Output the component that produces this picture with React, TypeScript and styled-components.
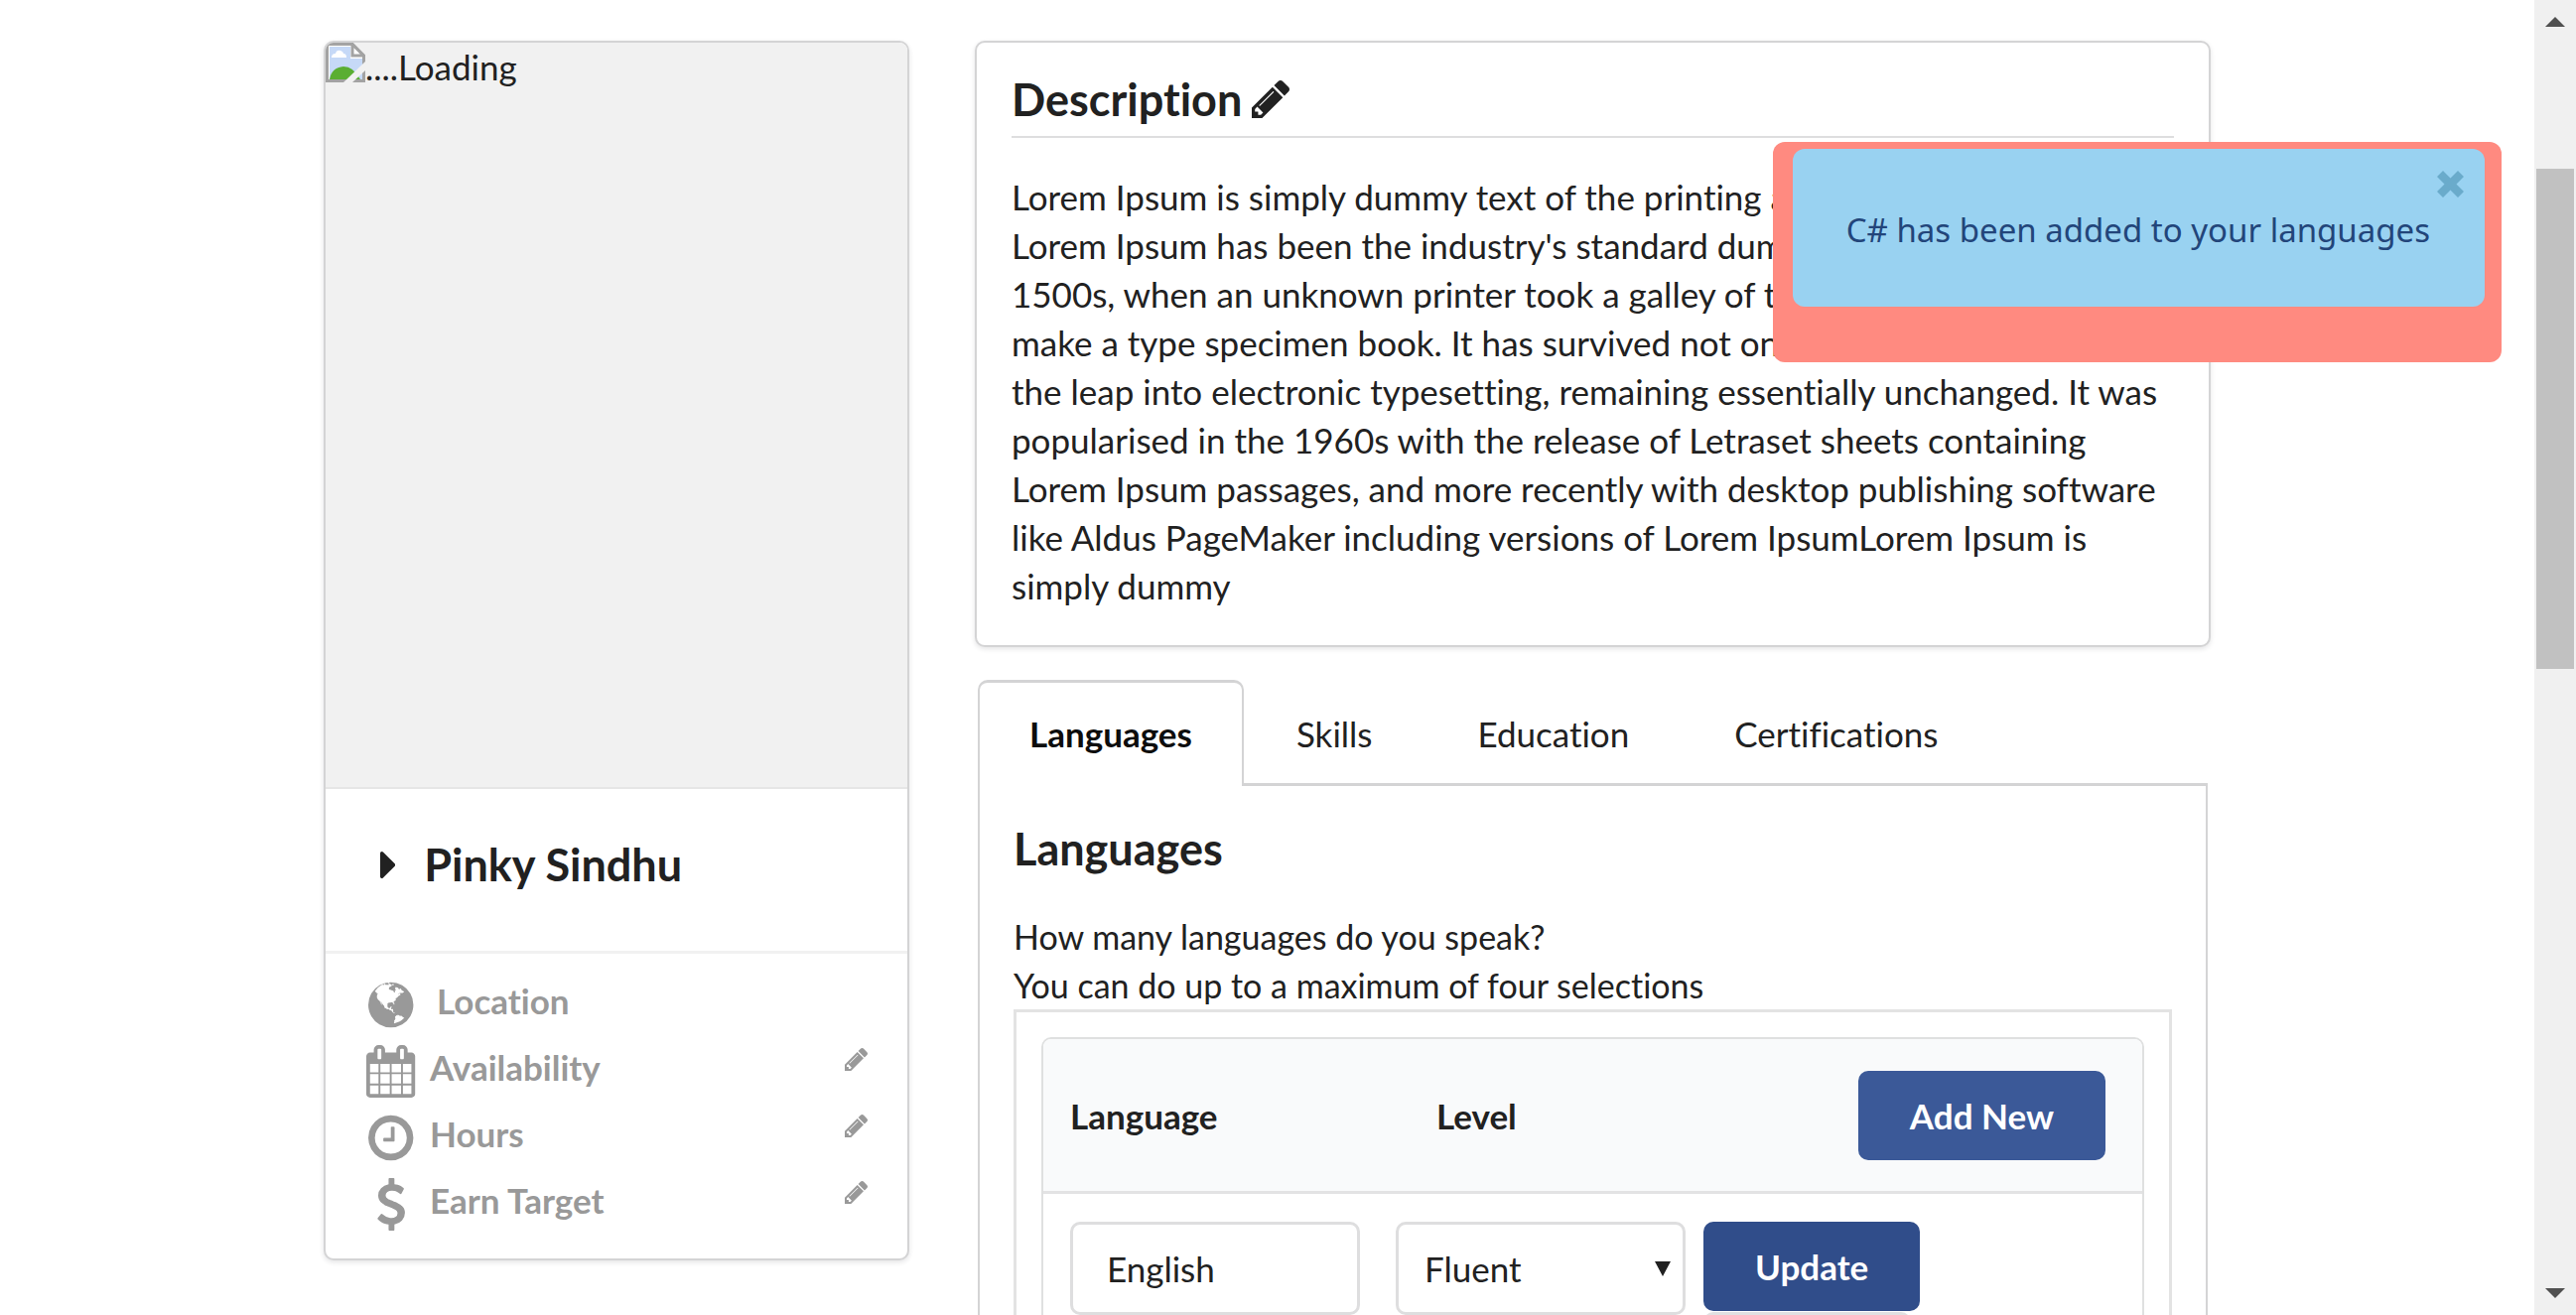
import React from "react";
import styled, { createGlobalStyle, css } from "styled-components";

const GlobalStyle = createGlobalStyle`
  *, *::before, *::after { box-sizing: border-box; }
  html, body { margin: 0; padding: 0; background: #fff; }
  body, button, input, select {
    font-family: Lato, "Open Sans", sans-serif;
    font-size: 35px;
    line-height: 49px;
    font-variant-ligatures: none;
    color: #212121;
  }
  h2, h3, p, ul { margin: 0; padding: 0; }
`;

/* ---------- page frame ---------- */

const Page = styled.div`
  display: flex;
  height: 100vh;
  overflow: hidden;
  position: relative;
`;

const Main = styled.main`
  flex: 1;
  min-width: 0;
  display: flex;
  justify-content: center;
  align-items: flex-start;
`;

const Columns = styled.div`
  width: 100%;
  max-width: 1901px;
  display: grid;
  grid-template-columns: 590fr 1245fr;
  gap: 66px;
  align-items: start;
  padding-top: 41px;
`;

const ScrollTrack = styled.div`
  width: 42px;
  display: flex;
  flex-direction: column;
  align-items: center;
  background: #f0f0f0;
`;

const ScrollThumb = styled.div`
  width: 38px;
  height: 38%;
  margin-top: 128px;
  background: #c1c1c1;
`;

const ScrollArrow = styled.svg`
  width: 42px;
  height: 42px;
  flex: none;
  fill: #505050;
  &:last-child { margin-top: auto; }
`;

/* ---------- icons ---------- */

const paths = {
  globe:
    "M768 128q209 0 385.500 103t279.500 279.500 103 385.500-103 385.500-279.500 279.500-385.500 103-385.500-103-279.500-279.500-103-385.500 103-385.500 279.500-279.500 385.500-103zM1042 521q-2 1-9.500 9.500t-13.500 9.500q2 0 4.500-5t5-11 3.500-7q6-7 22-15 14-6 52-12 34-8 51 11-2-2 9.500-13t14.500-12q3-2 15-4.500t15-7.500l2-22q-12 1-17.500-7t-6.500-21q0 2-6 8 0-7-4.500-8t-11.500 1-9 1q-10-3-15-7.500t-8-16.500-4-15q-2-5-9.500-11t-9.500-10q-1-2-2.500-5.500t-3-6.500-4-5.500-5.500-2.500-7 5-7.500 10-4.500 5q-3-2-6-1.500t-4.500 1-4.500 3-5 3.500q-3 2-8.500 3t-8.500 2q15-5-1-11-10-4-16-3 9-4 7.500-12t-8.500-14h5q-1-4-8.500-8.500t-17.500-8.500-13-6q-8-5-34-9.500t-33-.5q-5 6-4.500 10.500t4 14 3.500 12.500q1 6-5.500 13t-6.500 12q0 7 14 15.500t10 21.500q-3 8-16 16t-16 12q-5 8-1.500 18.500t10.500 16.500q2 2 1.500 4t-3.500 4.500-5.500 4-6.500 3.500l-3 2q-11 5-20.500-6t-13.500-26q-7-25-16-30-23-8-29 1-5-13-41-26-25-9-58-4 6-1 0-15-7-15-19-12 3-6 4-17.500t1-13.500q3-13 12-23 1-1 7-8.500t9.500-13.500.5-6q35 4 50-11 5-5 11.500-17t10.500-17q9-6 14-5.500t14.500 5.500 14.500 5q14 1 15.500-11t-7.500-20q12 1 3-17-4-7-8-9-12-4-27 5-8 4 2 8-1-1-9.500 10.500t-16.500 17.500-16-5q-1-1-5.500-13.500t-9.500-13.500q-8 0-16 15 3-8-11-15t-24-8q19-12-8-27-7-4-20.500-5t-19.500 4q-5 7-5.500 11.500t5 8 10.500 5.500 11.500 4 8.500 3q14 10 8 14-2 1-8.500 3.500t-11.500 4.500-6 4q-3 4 0 14t-2 14q-5-5-9-17.500t-7-16.500q7 9-25 6l-10-1q-4 0-16 2t-20.500 1-13.500-8q-4-8 0-20 1-4 4-2-4-3-11-9.500t-10-8.500q-46 15-94 41 6 1 12-1 5-2 13-6.500t10-5.500q34-14 42-7l5-5q14 16 20 25-7-4-30-1-20 6-22 12 7 12 5 18-4-3-11.500-10t-14.500-11-15-5q-16 0-22 1-146 80-235 222 7 7 12 8 4 1 5 9t2.500 11 11.500-3q9 8 3 19 1-1 44 27 19 17 21 21 3 11-10 18-1-2-9-9t-9-4q-3 5 .5 18.500t10.500 12.500q-7 0-9.500 16t-2.500 35.500-1 23.500l2 1q-3 12 5.500 34.500t21.500 19.500q-13 3 20 43 6 8 8 9 3 2 12 7.500t15 10 10 10.500q4 5 10 22.500t14 23.500q-2 6 9.500 20t10.500 23q-1 0-2.500 1t-2.500 1q3 7 15.500 14t15.500 13q1 3 2 10t3 11 8 2q2-20-24-62-15-25-17-29-3-5-5.500-15.500t-4.500-14.500q2 0 6 1.500t8.500 3.500 7.500 4 2 3q-3 7 2 17.500t12 18.500 17 19 12 13q6 6 14 19.500t0 13.500q9 0 20 10.500t17 19.500q5 8 8 26t5 24q2 7 8.500 13.500t12.500 9.500l16 8 13 7q5 2 18.500 10.500t21.500 11.500q10 4 16 4t14.500-2.500 13.500-3.500q15-2 29 15t21 21q36 19 55 11-2 1 .5 7.500t8 15.500 9 14.500 5.500 8.500q5 6 18 15t18 15q6-4 7-9-3 8 7 20t18 10q14-3 14-32-31 15-49-18 0-1-2.500-5.500t-4-8.500-2.500-8.500 0-7.500 5-3q9 0 10-3.500t-2-12.500-4-13q-1-8-11-20t-12-15q-5 9-16 8t-16-9q0 1-1.500 5.500t-1.500 6.500q-13 0-15-1 1-3 2.500-17.500t3.500-22.500q1-4 5.500-12t7.500-14.500 4-12.500-4.500-9.500-17.500-2.500q-19 1-26 20-1 3-3 10.500t-5 11.500-9 7q-7 3-24 2t-24-5q-13-8-22.500-29t-9.500-37q0-10 2.500-26.500t3-25-5.500-24.500q3-2 9-9.500t10-10.500q2-1 4.500-1.500t4.500 0 4-1.500 3-6q-1-1-4-3-3-3-4-3 7 3 28.500-1.500t27.500 1.500q15 11 22-2 0-1-2.500-9.500t-.5-13.500q5 27 29 9 3 3 15.500 5t17.500 5q3 2 7 5.500t5.500 4.500 5-.500 8.500-6.500q10 14 12 24 11 40 19 44 7 3 11 2t4.500-9.500 0-14-1.500-12.500l-1-8v-18l-1-8q-15-3-18.500-12t1.500-18.500 15-18.500q1-1 8-3.500t15.500-6.500 12.500-8q21-19 15-35 7 0 11-9-1 0-5-3t-7.500-5-4.500-2q9-5 2-16 5-3 7.500-11t7.500-10q9 12 21 2 8-8 1-16 5-7 20.500-10.500t18.500-9.500q7 2 8-2t1-12 3-12q4-5 15-9t13-5l17-11q3-4 0-4 18 2 31-11 10-11-6-20 3-6-3-9.500t-15-5.500q3-1 11.500-.5t10.500-1.500q15-10-7-16-17-5-43 12zM879 1527q206-36 351-189-3-3-12.500-4.500t-12.500-3.500q-18-7-24-8 1-7-2.500-13t-8-9-12.500-8-11-7q-2-2-7-6t-7-5.500-7.500-4.500-8.500-2-10 1l-3 1q-3 1-5.500 2.500t-5.500 3-4 3 0 2.500q-21-17-36-22-5-1-11-5.500t-10.500-7-10-1.500-11.500 7q-5 5-6 15t-2 13q-7-5 0-17.500t2-18.500q-3-6-10.500-4.500t-12 4.500-11.500 8.500-9 6.500-8.500 5.500-8.500 7.500q-3 4-6 12t-5 11q-2-4-11.500-6.500t-9.500-5.500q2 10 4 35t5 38q7 31-12 48-27 25-29 40-4 22 12 26 0 7-8 20.500t-7 21.500q0 6 2 16z",
  calendar:
    "M128 1664h288v-288h-288v288zM480 1664h320v-288h-320v288zM128 1312h288v-320h-288v320zM480 1312h320v-320h-320v320zM128 928h288v-288h-288v288zM864 1664h320v-288h-320v288zM480 928h320v-288h-320v288zM1248 1664h288v-288h-288v288zM864 1312h320v-320h-320v320zM512 448v-288q0-13-9.500-22.500t-22.500-9.500h-64q-13 0-22.500 9.500t-9.500 22.500v288q0 13 9.500 22.500t22.500 9.500h64q13 0 22.500-9.500t9.500-22.500zM1248 1312h288v-320h-288v320zM864 928h320v-288h-320v288zM1248 928h288v-288h-288v288zM1280 448v-288q0-13-9.500-22.500t-22.500-9.500h-64q-13 0-22.500 9.500t-9.500 22.500v288q0 13 9.500 22.500t22.500 9.500h64q13 0 22.500-9.500t9.500-22.500zM1664 384v1280q0 52-38 90t-90 38h-1408q-52 0-90-38t-38-90v-1280q0-52 38-90t90-38h128v-96q0-66 47-113t113-47h64q66 0 113 47t47 113v96h384v-96q0-66 47-113t113-47h64q66 0 113 47t47 113v96h128q52 0 90 38t38 90z",
  clock:
    "M896 544v448q0 14-9 23t-23 9h-320q-14 0-23-9t-9-23v-64q0-14 9-23t23-9h224v-352q0-14 9-23t23-9h64q14 0 23 9t9 23zM1312 896q0-148-73-273t-198-198-273-73-273 73-198 198-73 273 73 273 198 198 273 73 273-73 198-198 73-273zM1536 896q0 209-103 385.500t-279.500 279.500-385.500 103-385.500-103-279.500-279.500-103-385.500 103-385.500 279.500-279.500 385.500-103 385.500 103 279.500 279.500 103 385.500z",
  dollar:
    "M978 1185q0 153-99.500 263.500t-258.500 136.500v175q0 14-9 23t-23 9h-135q-13 0-22.500-9.500t-9.500-22.500v-175q-66-9-127.500-31t-101.500-44.500-74-48-46.500-37.500-17.500-18q-17-21-2-41l103-135q7-10 23-12 15-2 24 9l2 2q113 99 243 125 37 8 74 8 81 0 142.500-43t61.500-122q0-28-15-53t-33.500-42-58.500-37.500-66-32-80-32.500q-39-16-61.500-25t-61.500-26.500-62.500-31-56.500-35.500-53.500-42.500-43.500-49-35.500-58-21-66.500-8.500-78q0-138 98-242t255-134v-180q0-13 9.500-22.500t22.500-9.500h135q14 0 23 9t9 23v176q57 6 110.500 23t87 33.500 63.500 37.500 39 29 15 14q17 18 5 38l-81 146q-8 15-23 16-14 3-27-7-3-3-14.500-12t-39-26.500-58.500-32-74.500-26-85.500-11.500q-95 0-155 43t-60 111q0 26 8.500 48t29.500 41.500 39.500 33 56 31 60.500 27 70 27.500q53 20 81 31.500t76 35 75.500 42.500 62 50 53 63.500 31.500 76.500 13 94z",
  pencil:
    "M363 1536l91-91-235-235-91 91v107h128v128h107zM886 608q0-22-22-22-10 0-17 7l-542 542q-7 7-7 17 0 22 22 22 10 0 17-7l542-542q7-7 7-17zM832 416l416 416-832 832h-416v-416zM1515 512q0 53-37 90l-166 166-416-416 166-165q36-38 90-38 53 0 91 38l235 234q37 39 37 91z",
  caret:
    "M576 896q0 26-19 45l-448 448q-19 19-45 19t-45-19-19-45v-896q0-26 19-45t45-19 45 19l448 448q19 19 19 45z",
};

type IconName = keyof typeof paths;

const boxes: Record<IconName, string> = {
  globe: "0 0 1536 1792",
  calendar: "0 0 1664 1792",
  clock: "0 0 1536 1792",
  dollar: "0 0 1024 1792",
  pencil: "0 149 1515 1515",
  caret: "0 384 576 1024",
};

const Svg = styled.svg<{ $size: number }>`
  height: ${(p) => p.$size}px;
  width: auto;
  flex: none;
  display: block;
  fill: currentColor;
`;

const Icon = ({ name, size }: { name: IconName; size: number }) => (
  <Svg $size={size} viewBox={boxes[name]} aria-hidden="true">
    <path d={paths[name]} />
  </Svg>
);

const PlainButton = styled.button`
  display: flex;
  padding: 0;
  border: 0;
  background: none;
  color: inherit;
  cursor: pointer;
`;

/* ---------- shared surfaces ---------- */

const cardFrame = css`
  background: #fff;
  border: 2px solid #d4d4d5;
  border-radius: 10px;
  box-shadow: 0 2px 5px rgba(34, 36, 38, 0.12);
`;

/* ---------- profile card ---------- */

const ProfileCard = styled.aside`
  ${cardFrame}
  overflow: hidden;
`;

const Photo = styled.div`
  display: flex;
  align-items: flex-start;
  height: 752px;
  background: #f1f1f1;
  border-bottom: 2px solid #e6e6e6;
`;

const BrokenImage = styled.svg`
  width: 40px;
  height: 40px;
`;

const NameRow = styled.div`
  display: flex;
  align-items: center;
  gap: 29px;
  padding: 48px 55px 59px;
  border-bottom: 3px solid #f1f1f1;
`;

const Heading = styled.h2`
  font-size: 45px;
  line-height: 56px;
  font-weight: 700;
`;

const Facts = styled.ul`
  list-style: none;
  && { padding: 18px 40px 21px 41px; }
`;

const Fact = styled.li`
  display: grid;
  grid-template-columns: 50px 1fr auto;
  align-items: center;
  column-gap: 14px;
  height: 67px;
  color: #999;
  font-weight: 700;
`;

const FactIcon = styled.span`
  display: flex;
  justify-content: center;
`;

const FactLabel = styled.span<{ $spaced?: boolean }>`
  padding: 0 0 8px ${(p) => (p.$spaced ? 7 : 0)}px;
`;

const FactEdit = styled(PlainButton)`
  padding-bottom: 24px;
`;

/* ---------- right column ---------- */

const DescriptionCard = styled.section`
  ${cardFrame}
  padding: 29px 35px 35px;
`;

const TitleRow = styled.div`
  display: flex;
  align-items: center;
  gap: 10px;
  padding-bottom: 9px;
  margin-bottom: 35px;
  border-bottom: 2px solid #dededf;
`;

const Tabs = styled.div`
  display: flex;
  margin: 33px 3px 0;
  border-bottom: 3px solid #d4d4d5;
`;

const Tab = styled.button<{ $active?: boolean }>`
  padding: 27px 51px 25px;
  border: 2px solid transparent;
  border-top-width: 3px;
  border-bottom: 0;
  background: none;
  cursor: pointer;
  ${(p) =>
    p.$active &&
    css`
      margin-bottom: -3px;
      padding: 27px 50px 28px;
      border-color: #d4d4d5;
      border-radius: 10px 10px 0 0;
      background: #fff;
      color: #0d0d0d;
      font-weight: 700;
    `}
`;

const Panel = styled.section`
  margin: 0 3px;
  padding: 35px 34px;
  border: 2px solid #d4d4d5;
  border-top: 0;
`;

const PanelIntro = styled.p`
  font-size: 34px;
  && { margin-top: 36px; }
`;

const Frame = styled.div`
  padding: 25px;
  border: 3px solid #e3e3e3;
`;

const LanguageTable = styled.table`
  width: 100%;
  table-layout: fixed;
  border: 2px solid #dfe0e0;
  border-radius: 10px;
  border-collapse: separate;
  border-spacing: 0;
  text-align: left;
`;

const HeadCell = styled.th<{ $width?: string }>`
  width: ${(p) => p.$width ?? "auto"};
  padding: 32px 27px 31px;
  background: #f9fafb;
  border-bottom: 3px solid #e3e3e4;
  font-weight: 700;
  &:first-child { border-top-left-radius: 8px; }
  &:last-child {
    border-top-right-radius: 8px;
    padding-right: 37px;
  }
`;

const BodyCell = styled.td`
  padding: 28px 27px;
`;

const EditRow = styled.div`
  display: flex;
  align-items: flex-start;
`;

const field = css`
  width: 292px;
  height: 94px;
  border: 3px solid #dededf;
  border-radius: 10px;
  background: #fff;
`;

const TextField = styled.input`
  ${field}
  padding: 0 34px;
  margin-right: 36px;
`;

const SelectWrap = styled.div`
  display: grid;
  align-items: center;
  margin-right: 18px;
  > * { grid-area: 1 / 1; }
`;

const Select = styled.select`
  ${field}
  padding: 0 26px;
  appearance: none;
`;

const SelectArrow = styled.svg`
  width: 16px;
  height: 15px;
  justify-self: end;
  margin-right: 15px;
  fill: #212121;
  pointer-events: none;
`;

const Actions = styled.div`
  display: flex;
  flex-direction: column;
  align-items: flex-start;
  gap: 1px;
`;

const tones = {
  primary: css`background: #3b5998; color: #fff;`,
  pressed: css`background: #304d8a; color: #fff;`,
  neutral: css`background: #e0e1e2; color: #5a5a5a;`,
};

const Button = styled.button<{ $tone: keyof typeof tones }>`
  height: 90px;
  padding: 0 52px;
  border: 0;
  border-radius: 10px;
  font-weight: 700;
  white-space: nowrap;
  cursor: pointer;
  ${(p) => tones[p.$tone]}
`;

const PushRight = styled.div`
  display: flex;
  justify-content: flex-end;
`;

/* ---------- notification ---------- */

const ToastFrame = styled.div`
  position: absolute;
  top: 143px;
  right: 75px;
  padding: 7px 17px 56px 20px;
  border-radius: 12px;
  background: #ff8a80;
`;

const Toast = styled.div`
  display: flex;
  align-items: center;
  position: relative;
  height: 159px;
  padding: 4px 55px 0 54px;
  border-radius: 12px;
  background: #99d2f1;
  color: #22457a;
  font-family: "Noto Sans", "Open Sans", sans-serif;
  font-size: 33px;
  white-space: nowrap;
`;

const ToastClose = styled(PlainButton)`
  position: absolute;
  top: 22px;
  right: 21px;
  color: #6aabcb;
`;

const facts: { icon: IconName; label: string; editable: boolean }[] = [
  { icon: "globe", label: "Location", editable: false },
  { icon: "calendar", label: "Availability", editable: true },
  { icon: "clock", label: "Hours", editable: true },
  { icon: "dollar", label: "Earn Target", editable: true },
];

const tabs = ["Languages", "Skills", "Education", "Certifications"];

const description =
  "Lorem Ipsum is simply dummy text of the printing and typesetting industry. Lorem Ipsum has been the industry's standard dummy text ever since the 1500s, when an unknown printer took a galley of type and scrambled it to make a type specimen book. It has survived not only five centuries, but also the leap into electronic typesetting, remaining essentially unchanged. It was popularised in the 1960s with the release of Letraset sheets containing Lorem Ipsum passages, and more recently with desktop publishing software like Aldus PageMaker including versions of Lorem IpsumLorem Ipsum is simply dummy";

export default function App() {
  return (
    <Page>
      <GlobalStyle />
      <Main>
        <Columns>
          <ProfileCard>
            <Photo>
              <BrokenImage viewBox="0 0 40 40" aria-hidden="true">
                <path d="M1.500 1.500H27L38.500 13V38.500H1.500z" fill="#fff" stroke="#a3a3a3" strokeWidth="3" />
                <path d="M4 4h21v12h12v21H4z" fill="#c6d9f7" />
                <path d="M6 15q0-4 4-4 1-4 5-3 3 1 3 3 3 0 3 4z" fill="#fff" />
                <path d="M4 37q2-12 14-13 10 0 17 13z" fill="#5aae32" />
                <path d="M27 1.500V13H38.500z" fill="#fff" stroke="#a3a3a3" strokeWidth="3" />
                <path d="M28 0H40V12z" fill="#f1f1f1" />
                <path d="M27 1.500L38.500 13" stroke="#a3a3a3" strokeWidth="3" />
                <path d="M40 19L18 40h9L40 28z" fill="#f1f1f1" />
              </BrokenImage>
              <span>....Loading</span>
            </Photo>
            <NameRow>
              <Icon name="caret" size={27} />
              <Heading>Pinky Sindhu</Heading>
            </NameRow>
            <Facts>
              {facts.map((f) => (
                <Fact key={f.label}>
                  <FactIcon>
                    <Icon name={f.icon} size={53} />
                  </FactIcon>
                  <FactLabel $spaced={!f.editable}>{f.label}</FactLabel>
                  {f.editable && (
                    <FactEdit type="button" aria-label={`Edit ${f.label}`}>
                      <Icon name="pencil" size={23} />
                    </FactEdit>
                  )}
                </Fact>
              ))}
            </Facts>
          </ProfileCard>

          <div>
            <DescriptionCard>
              <TitleRow>
                <Heading>Description</Heading>
                <PlainButton type="button" aria-label="Edit description">
                  <Icon name="pencil" size={38} />
                </PlainButton>
              </TitleRow>
              <p>{description}</p>
            </DescriptionCard>

            <Tabs role="tablist">
              {tabs.map((t, i) => (
                <Tab key={t} type="button" role="tab" aria-selected={i === 0} $active={i === 0}>
                  {t}
                </Tab>
              ))}
            </Tabs>
            <Panel role="tabpanel">
              <Heading as="h3">Languages</Heading>
              <PanelIntro>
                How many languages do you speak?
                <br />
                You can do up to a maximum of four selections
              </PanelIntro>
              <Frame>
                <LanguageTable>
                  <thead>
                    <tr>
                      <HeadCell scope="col" $width="369px">Language</HeadCell>
                      <HeadCell scope="col" $width="369px">Level</HeadCell>
                      <HeadCell scope="col">
                        <PushRight>
                          <Button type="button" $tone="primary">Add New</Button>
                        </PushRight>
                      </HeadCell>
                    </tr>
                  </thead>
                  <tbody>
                    <tr>
                      <BodyCell colSpan={3}>
                        <EditRow>
                          <TextField aria-label="Language" defaultValue="English" />
                          <SelectWrap>
                            <Select aria-label="Level" defaultValue="Fluent">
                              <option>Fluent</option>
                            </Select>
                            <SelectArrow viewBox="0 0 16 15" aria-hidden="true">
                              <path d="M0 0h16L8 15z" />
                            </SelectArrow>
                          </SelectWrap>
                          <Actions>
                            <Button type="button" $tone="pressed">Update</Button>
                            <Button type="button" $tone="neutral">Cancel</Button>
                          </Actions>
                        </EditRow>
                      </BodyCell>
                    </tr>
                  </tbody>
                </LanguageTable>
              </Frame>
            </Panel>
          </div>
        </Columns>
      </Main>

      <ScrollTrack aria-hidden="true">
        <ScrollArrow viewBox="0 0 42 42">
          <path d="M11 27h20L21 17z" />
        </ScrollArrow>
        <ScrollThumb />
        <ScrollArrow viewBox="0 0 42 42">
          <path d="M11 15h20L21 25z" />
        </ScrollArrow>
      </ScrollTrack>

      <ToastFrame role="status">
        <Toast>
          C# has been added to your languages
          <ToastClose type="button" aria-label="Dismiss">
            <svg width="27" height="27" viewBox="0 0 27 27" aria-hidden="true">
              <path
                d="M6 0L13.500 7.500 21 0 27 6 19.500 13.500 27 21 21 27 13.500 19.500 6 27 0 21 7.500 13.500 0 6z"
                fill="currentColor"
              />
            </svg>
          </ToastClose>
        </Toast>
      </ToastFrame>
    </Page>
  );
}
